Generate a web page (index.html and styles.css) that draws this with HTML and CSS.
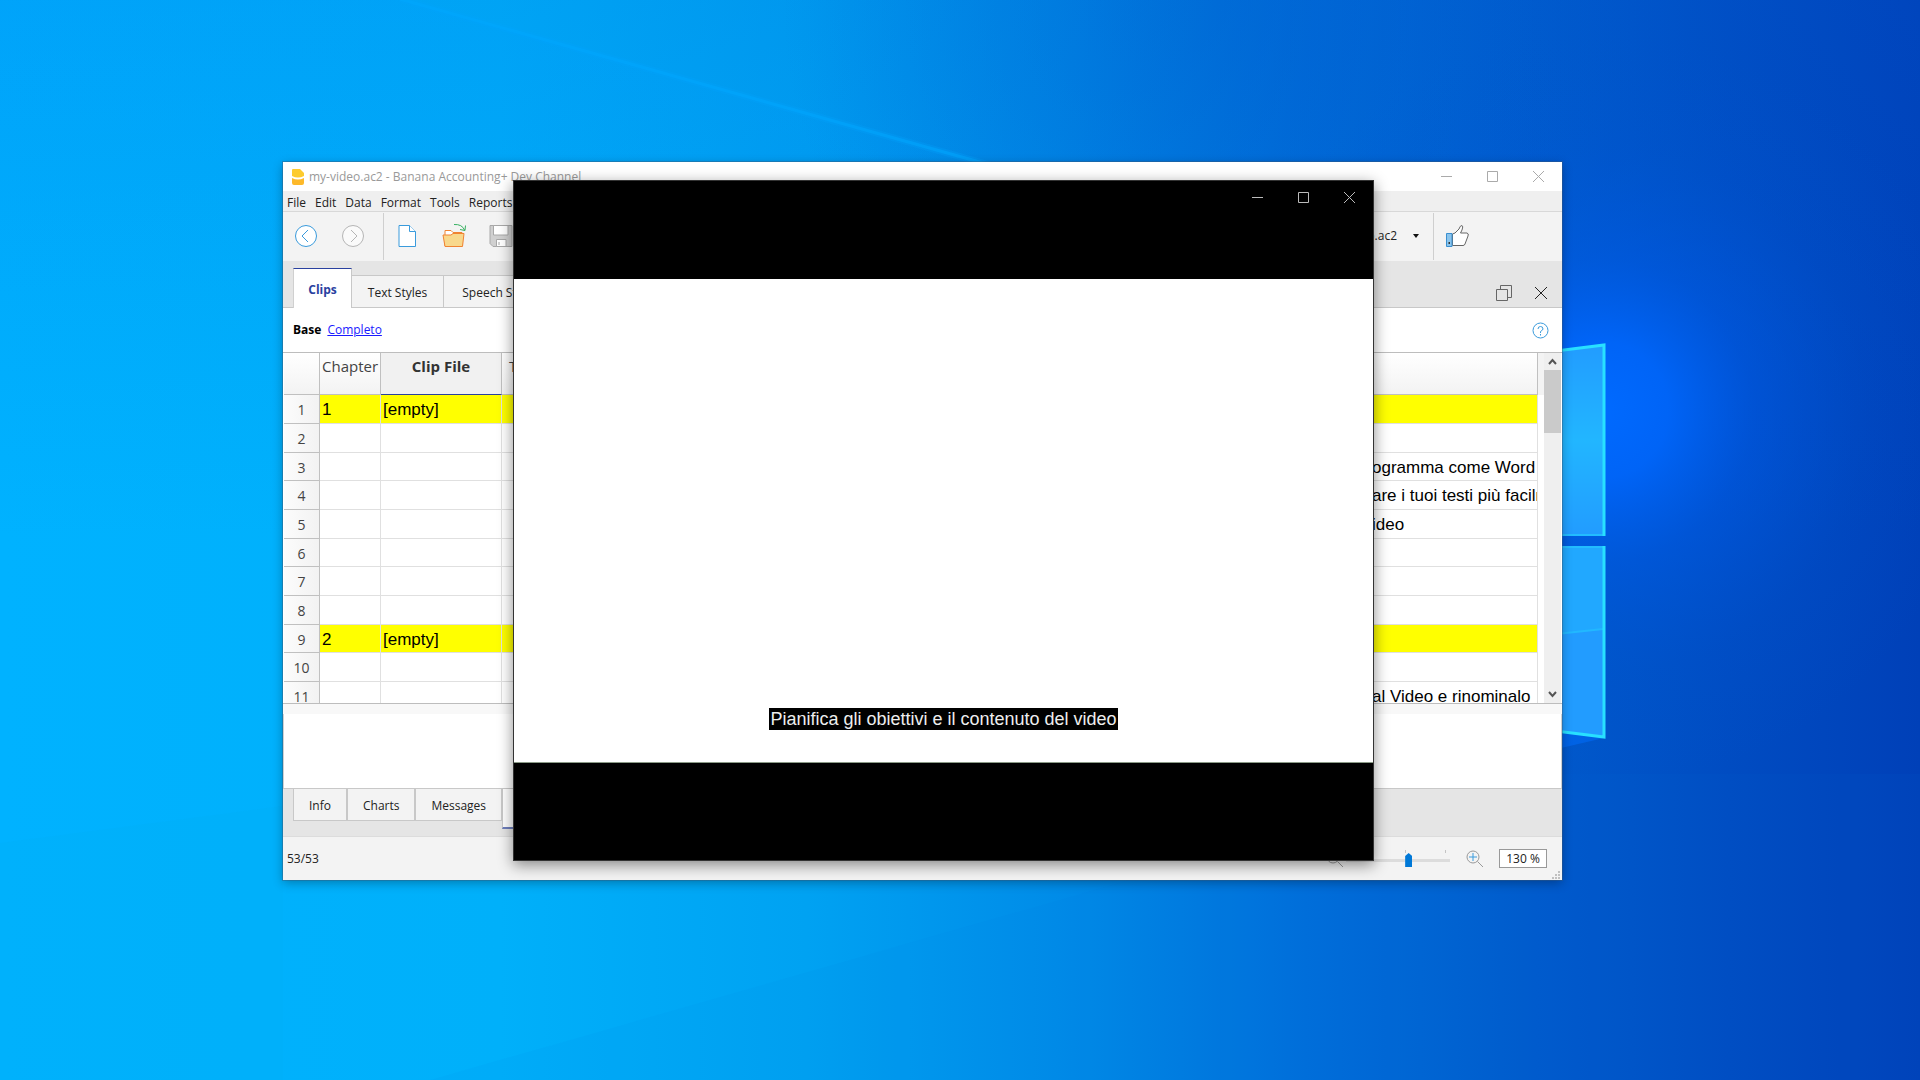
FILE: index.html
```html
<!DOCTYPE html>
<html lang="it">
<head>
<meta charset="utf-8">
<title>my-video.ac2 - Banana Accounting+ Dev Channel</title>
<link rel="stylesheet" href="styles.css">
</head>
<body>
<div class="desktop">
  <svg class="wallpaper" viewBox="0 0 1920 1080" preserveAspectRatio="xMidYMid slice" aria-hidden="true">
    <defs>
      <linearGradient id="sky" x1="0" y1="0" x2="1" y2="0">
        <stop offset="0" stop-color="#00b2ff"/>
        <stop offset=".26" stop-color="#00b0fa"/>
        <stop offset=".42" stop-color="#00a2f2"/>
        <stop offset=".55" stop-color="#008ce8"/>
        <stop offset=".68" stop-color="#006eda"/>
        <stop offset=".8" stop-color="#005acc"/>
        <stop offset=".9" stop-color="#004cc2"/>
        <stop offset="1" stop-color="#0040b8"/>
      </linearGradient>
      <linearGradient id="shade" x1="0" y1="0" x2="0" y2="1">
        <stop offset="0" stop-color="#0060d8" stop-opacity=".16"/>
        <stop offset=".5" stop-color="#0060d8" stop-opacity="0"/>
      </linearGradient>
      <radialGradient id="dusk" gradientUnits="userSpaceOnUse" cx="1220" cy="0" r="440">
        <stop offset="0" stop-color="#0058c8" stop-opacity=".32"/>
        <stop offset="1" stop-color="#0058c8" stop-opacity="0"/>
      </radialGradient>
      <radialGradient id="glow" gradientUnits="userSpaceOnUse" cx="1600" cy="410" r="380">
        <stop offset="0" stop-color="#006aff"/>
        <stop offset=".18" stop-color="#0066fc" stop-opacity=".9"/>
        <stop offset=".4" stop-color="#005cec" stop-opacity=".45"/>
        <stop offset=".7" stop-color="#0056d8" stop-opacity=".15"/>
        <stop offset="1" stop-color="#0054d0" stop-opacity="0"/>
      </radialGradient>
      <linearGradient id="beam" x1="0" y1="0" x2="0" y2="1">
        <stop offset="0" stop-color="#009dff" stop-opacity=".45"/>
        <stop offset="1" stop-color="#009dff" stop-opacity="0"/>
      </linearGradient>
      <linearGradient id="pane" x1="0" y1="0" x2="0" y2="1">
        <stop offset="0" stop-color="#229cff"/>
        <stop offset=".5" stop-color="#22b6ff"/>
        <stop offset="1" stop-color="#229cff"/>
      </linearGradient>
    </defs>
    <rect width="1920" height="1080" fill="url(#sky)"/>
    <rect width="1920" height="1080" fill="url(#shade)"/>
    <rect width="1920" height="1080" fill="url(#dusk)"/>
    <path d="M400 0 1000 166 1000 300 0 300 0 0Z" fill="url(#beam)" opacity=".4"/>
    <path d="M400-1 990 165" stroke="#00a4ff" stroke-width="7" opacity=".25"/>
    <path d="M400-1 990 165" stroke="#00a8ff" stroke-width="3" opacity=".5"/>
    <path d="M0 843 283 806V1080H0Z" fill="#00b0f4" opacity=".25"/>
    <path d="M1500 774 430 1080H1920V774Z" fill="#0078e0" opacity=".06"/>
    <rect width="1920" height="1080" fill="url(#glow)"/>
    <path d="M1561 732 1604 738 1561 748Z" fill="#0068f0" opacity=".7"/>
    <path d="M1500 358 1603 345V535H1500Z" fill="url(#pane)"/>
    <path d="M1500 547H1603V736L1500 724Z" fill="#229cff"/>
    <path d="M1500 547H1603V629L1500 640Z" fill="#22b0ff" opacity=".6"/>
    <path d="M1500 640 1603 629" stroke="#22b8ff" stroke-width="2"/>
    <path d="M1500 535H1603M1500 547H1603" stroke="#22bcff" stroke-width="2"/>
    <path d="M1500 358 1604 345V536M1604 546V737L1500 724" fill="none" stroke="#28e0ff" stroke-width="3"/>
  </svg>

  <main class="app">
    <header class="titlebar">
      <svg class="logo" viewBox="0 0 12 16" aria-hidden="true"><path d="M1 0H8L12 4V7Q6 10 0 7V1Q0 0 1 0Z" fill="#fdcb2e"/><path d="M0 9Q6 12 12 9V14Q12 16 10 16H2Q0 16 0 14Z" fill="#fdb92a"/></svg>
      <h1 class="caption">my-video.ac2 - Banana Accounting+ Dev Channel</h1>
      <div class="controls">
        <button type="button" aria-label="Minimize"><svg viewBox="0 0 11 11"><path d="M0 5.500H11"/></svg></button>
        <button type="button" aria-label="Maximize"><svg viewBox="0 0 11 11"><path d="M.5.500H10.500V10.500H.5Z"/></svg></button>
        <button type="button" aria-label="Close"><svg viewBox="0 0 11 11"><path d="M0 0 11 11M11 0 0 11"/></svg></button>
      </div>
    </header>
    <nav class="menubar">
      <button type="button">File</button><button type="button">Edit</button><button type="button">Data</button><button type="button">Format</button><button type="button">Tools</button><button type="button">Reports</button>
    </nav>
    <div class="toolbar">
      <button type="button" class="tool" aria-label="Back"><svg viewBox="0 0 24 24" fill="#fff" stroke="#3a9bdc"><circle cx="12" cy="12" r="10.500"/><path d="M14 6 8 12 14 18" fill="none"/></svg></button>
      <button type="button" class="tool" aria-label="Forward"><svg viewBox="0 0 24 24" fill="#fafafa" stroke="#b5b5b5"><circle cx="12" cy="12" r="10.500"/><path d="M10 6 16 12 10 18" fill="none"/></svg></button>
      <span class="divider"></span>
      <button type="button" class="tool" aria-label="New"><svg viewBox="0 0 24 24" fill="#fff" stroke="#3a9bdc"><path d="M4 1.500H14.500L20.500 7.500V22.500H4Z"/><path d="M14.500 1.500V7.500H20.500"/></svg></button>
      <button type="button" class="tool" aria-label="Open"><svg viewBox="0 0 24 24" stroke="#f08332"><path d="M3 22V6.500H9L11 8.500H20V22Z" fill="#fff"/><path d="M1 11H9L11 9.500H22L20.500 22.500H3Z" fill="#f8d88c"/><path d="M12 .5Q20 0 22.500 6M18 5.500 23 6.500 23.500 1.500" fill="none" stroke="#36b060"/></svg></button>
      <button type="button" class="tool" aria-label="Save"><svg viewBox="0 0 24 24" fill="#d0d0d0" stroke="#a8a8a8"><path d="M1 1.500H23V22.500H4L1 19.500Z"/><path d="M4.500 1.500H19V11H4.500Z" fill="#fff"/><path d="M7.500 22.500V15.500H17V22.500Z" fill="#fff"/><path d="M10 18V21"/></svg></button>
      <div class="toolbar-end">
        <button type="button" class="recent">o.ac2<svg viewBox="0 0 6 4" aria-hidden="true"><path d="M0 0H6L3 4Z"/></svg></button>
        <span class="divider"></span>
        <button type="button" class="tool thumb" aria-label="Like"><svg viewBox="0 0 24 24" fill="#fff" stroke="#666"><path d="M7.500 10 10 9 14 5Q15 1.500 17 1.500 18.500 2 17 6L15.500 9H22Q24 9.500 23 12L20 20Q19.500 21.500 18 21.500H7.500Z"/><path d="M1.500 9.500H7V22.500H1.500Z" fill="#8ac4ec" stroke="#3a8fd0"/><path d="M3.500 19H5" stroke="#333" stroke-width="2"/></svg></button>
      </div>
    </div>
    <div class="tabs">
      <button type="button" class="tab tab-on">Clips</button>
      <button type="button" class="tab tab-styles">Text Styles</button>
      <button type="button" class="tab tab-speech">Speech St</button>
      <div class="tab-tools">
        <button type="button" aria-label="Restore"><svg viewBox="0 0 16 16" fill="none" stroke="#666"><path d="M.5 4.500H11.500V15.500H.5ZM4.500 4.500V.5H15.500V12.500H11.500"/></svg></button>
        <button type="button" aria-label="Close tab"><svg viewBox="0 0 16 16" stroke="#222"><path d="M2 2 14 14M14 2 2 14"/></svg></button>
      </div>
    </div>
    <div class="views">
      <b>Base</b><a href="#completo">Completo</a>
      <button type="button" class="help" aria-label="Help"><svg viewBox="0 0 17 17" fill="none" stroke="#3a9bdc"><circle cx="8.500" cy="8.500" r="7.500"/><path d="M6 7Q6 4.500 8.500 4.500T11 7Q11 8 8.500 9.500V11M8.500 12V13.500"/></svg></button>
    </div>
    <section class="sheet">
      <div class="grid">
        <table>
          <colgroup><col class="c-num"><col class="c-chapter"><col class="c-file"><col><col class="c-text"></colgroup>
          <thead><tr><th></th><th>Chapter</th><th class="current">Clip File</th><th class="title">T</th><th></th></tr></thead>
          <tbody>
            <tr class="mark"><th>1</th><td>1</td><td>[empty]</td><td></td><td></td></tr>
            <tr><th>2</th><td></td><td></td><td></td><td></td></tr>
            <tr><th>3</th><td></td><td></td><td></td><td>ogramma come Word</td></tr>
            <tr><th>4</th><td></td><td></td><td></td><td>are i tuoi testi più facilmente</td></tr>
            <tr><th>5</th><td></td><td></td><td></td><td>ideo</td></tr>
            <tr><th>6</th><td></td><td></td><td></td><td></td></tr>
            <tr><th>7</th><td></td><td></td><td></td><td></td></tr>
            <tr><th>8</th><td></td><td></td><td></td><td></td></tr>
            <tr class="mark"><th>9</th><td>2</td><td>[empty]</td><td></td><td></td></tr>
            <tr><th>10</th><td></td><td></td><td></td><td></td></tr>
            <tr><th>11</th><td></td><td></td><td></td><td>al Video e rinominalo</td></tr>
          </tbody>
        </table>
      </div>
      <div class="gutter"></div>
      <div class="scroll">
        <button type="button" aria-label="Scroll up"><svg viewBox="0 0 9 7"><path d="M1 6 4.500 2 8 6"/></svg></button>
        <span class="scroll-thumb"></span>
        <button type="button" class="down" aria-label="Scroll down"><svg viewBox="0 0 9 7"><path d="M1 1 4.500 5 8 1"/></svg></button>
      </div>
    </section>
    <div class="splitter"></div>
    <div class="panel"></div>
    <div class="docks">
      <button type="button" class="dock">Info</button>
      <button type="button" class="dock">Charts</button>
      <button type="button" class="dock">Messages</button>
      <button type="button" class="dock dock-on" aria-label="Current panel"></button>
    </div>
    <footer class="status">
      <span>53/53</span>
      <div class="zoom">
        <button type="button" class="lens" aria-label="Zoom out"><svg viewBox="0 0 18 18" fill="none" stroke="#999"><circle cx="7" cy="7" r="6"/><path d="M11.500 11.500 17 17"/><path d="M3.500 7H10.500" stroke="#3a9bdc"/></svg></button>
        <div class="slider">
          <span class="ticks"><i></i><i></i></span>
          <input type="range" min="0" max="100" value="61" aria-label="Zoom">
        </div>
        <button type="button" class="lens" aria-label="Zoom in"><svg viewBox="0 0 18 18" fill="none" stroke="#999"><circle cx="7" cy="7" r="6"/><path d="M11.500 11.500 17 17"/><path d="M3 7H11M7 3V11" stroke="#3a9bdc"/></svg></button>
        <input type="text" class="percent" value="130 %" aria-label="Zoom level">
        <svg class="grip" viewBox="0 0 9 9" aria-hidden="true"><path d="M6 0H8V2H6ZM6 3H8V5H6ZM3 3H5V5H3ZM0 6H2V8H0ZM3 6H5V8H3ZM6 6H8V8H6Z"/></svg>
      </div>
    </footer>
  </main>

  <section class="player" aria-label="Video">
    <header class="player-bar">
      <div class="controls">
        <button type="button" aria-label="Minimize"><svg viewBox="0 0 11 11"><path d="M0 5.500H11"/></svg></button>
        <button type="button" aria-label="Maximize"><svg viewBox="0 0 11 11"><path d="M.5.500H10.500V10.500H.5Z"/></svg></button>
        <button type="button" aria-label="Close"><svg viewBox="0 0 11 11"><path d="M0 0 11 11M11 0 0 11"/></svg></button>
      </div>
    </header>
    <div class="frame"><p class="subtitle">Pianifica gli obiettivi e il contenuto del video</p></div>
    <div class="player-foot"></div>
  </section>
</div>
</body>
</html>
```
FILE: styles.css
```css
* { box-sizing: border-box; }

body {
  margin: 0;
  font: 12px/16px "Open Sans", "Noto Sans", sans-serif;
  color: #222;
}

button {
  margin: 0;
  padding: 0;
  border: 0;
  background: none;
  font: inherit;
  color: inherit;
}

svg { display: block; }

.desktop {
  position: relative;
  min-height: 100vh;
  overflow: hidden;
  background: #0078d7;
}

.wallpaper {
  position: absolute;
  inset: 0;
  width: 100%;
  height: 100%;
}

/* Main window */
.app {
  position: absolute;
  top: 162px;
  left: 283px;
  right: 358px;
  display: flex;
  flex-direction: column;
  background: #fff;
  box-shadow: 0 0 0 1px rgba(60, 90, 120, .4), 0 3px 10px rgba(0, 0, 0, .3);
}

.titlebar {
  display: flex;
  align-items: center;
  height: 29px;
  padding-left: 9px;
  gap: 5px;
  color: #999;
}

.logo { width: 12px; height: 16px; }

.caption {
  margin: 0;
  font-size: 12px;
  font-weight: 400;
  line-height: 16px;
}

.controls {
  display: flex;
  margin-left: auto;
  stroke: #aaa;
  fill: none;
}

.titlebar .controls { padding-right: 1px; }

.controls button {
  display: grid;
  place-items: center;
  width: 46px;
  height: 28px;
}

.controls svg { width: 11px; height: 11px; }

.menubar {
  display: flex;
  gap: 9px;
  height: 21px;
  padding: 3px 4px 0;
  background: #efefef;
  border-bottom: 1px solid #d8d8d8;
}

.toolbar {
  display: flex;
  align-items: center;
  height: 49px;
  padding: 0 0 1px 11px;
  background: #f3f3f3;
}

.tool { width: 24px; height: 24px; margin-right: 23px; }
.tool svg { width: 24px; height: 24px; }

.divider {
  width: 1px;
  height: 47px;
  margin: 0 11px 0 -5px;
  background: #cfcfcf;
}

.toolbar-end {
  display: flex;
  align-items: center;
  margin-left: auto;
}

.recent { display: flex; align-items: center; gap: 16px; margin-right: 19px; }
.recent svg { width: 6px; height: 4px; fill: #111; }
.thumb { margin-right: 93px; }

.tabs {
  display: flex;
  align-items: flex-end;
  height: 47px;
  padding-left: 10px;
  background: #e5e5e5;
  box-shadow: inset 0 -1px #c8c8c8;
}

.tab {
  height: 33px;
  padding-top: 2px;
  background: #f3f3f3;
  border: 1px solid #c8c8c8;
  border-left: 0;
}

.tab-on {
  width: 59px;
  height: 40px;
  padding-top: 3px;
  background: #fff;
  border-top: 1px solid #2a419f;
  border-left: 1px solid #d0d0d0;
  border-bottom: 0;
  font-weight: 700;
  color: #2a419f;
}

.tab-styles { width: 92px; }
.tab-speech { width: 92px; }

.tab-tools {
  display: flex;
  gap: 21px;
  margin: 0 13px 7px auto;
}

.tab-tools svg { width: 16px; height: 16px; }

.views {
  display: flex;
  align-items: center;
  gap: 6px;
  height: 44px;
  padding: 0 13px 0 10px;
}

.views b { color: #000; }
.views a { color: #1a1aff; }
.help { margin-left: auto; }
.help svg { width: 17px; height: 17px; }

/* Spreadsheet */
.sheet {
  display: flex;
  height: 352px;
  padding: 0 1px;
  border: 1px solid #bdbdbd;
  border-width: 1px 0;
  overflow: hidden;
}

.grid { flex: 1; min-width: 0; overflow: hidden; }

table {
  width: 100%;
  table-layout: fixed;
  border-collapse: separate;
  border-spacing: 0;
}

.c-num { width: 36px; }
.c-chapter { width: 61px; }
.c-file { width: 121px; }
.c-text { width: 168px; }

td, th {
  padding: 0 2px;
  border-right: 1px solid #e0e0e0;
  border-bottom: 1px solid #e0e0e0;
  overflow: hidden;
  white-space: nowrap;
}

thead th {
  height: 42px;
  padding-top: 3px;
  vertical-align: top;
  font-size: 15px;
  font-weight: 400;
  line-height: 20px;
  color: #444;
  background: linear-gradient(#fff, #f3f3f3);
  border-color: #c0c0c0;
}

thead th.current {
  font-weight: 700;
  color: #333;
  background: #f1f1f1;
  border-bottom-color: #2a419f;
}

thead th.title { padding-left: 7px; text-align: left; }

tbody tr { height: 29px; }
tbody tr:nth-child(3n) { height: 28px; }

tbody th {
  padding-top: 2px;
  font-size: 14px;
  font-weight: 400;
  line-height: 20px;
  color: #444;
  background: linear-gradient(90deg, #fcfcfc, #f2f2f2);
  border-color: #c0c0c0;
}

td {
  padding-top: 2px;
  font: 17px/20px "Liberation Sans", Arial, sans-serif;
  color: #000;
}

.mark td { background: #ff0; }

.gutter { width: 6px; }
.gutter::before { content: ""; display: block; height: 42px; background: #f3f3f3; }

.scroll {
  display: flex;
  flex-direction: column;
  width: 17px;
  background: #efefef;
}

.scroll button {
  display: grid;
  place-items: center;
  height: 17px;
}

.scroll .down { margin-top: auto; }
.scroll svg { width: 9px; height: 7px; fill: none; stroke: #555; stroke-width: 2; }
.scroll-thumb { height: 63px; background: #cacaca; }

.splitter { height: 10px; background: #f8f8f8; }

.panel { height: 74px; border: 1px solid #d0d0d0; border-width: 0 1px; }

.docks {
  display: flex;
  height: 48px;
  padding-left: 10px;
  background: #e5e5e5;
  border-top: 1px solid #c8c8c8;
}

.dock {
  height: 32px;
  padding: 2px 15px 0;
  background: #f3f3f3;
  border: 1px solid #c8c8c8;
  border-top-width: 0;
}

.dock-on {
  width: 92px;
  height: 40px;
  background: #fff;
  border-bottom: 2px solid #6e7ebc;
}

.status {
  display: flex;
  align-items: center;
  height: 44px;
  padding-left: 4px;
  background: #f3f3f3;
  border-top: 1px solid #dcdcdc;
}

.zoom {
  display: flex;
  align-items: center;
  align-self: stretch;
  margin-left: auto;
}

.lens svg { width: 18px; height: 18px; }

.slider { width: 104px; margin: 0 16px 0 2px; }

.ticks {
  display: flex;
  justify-content: flex-end;
  gap: 39px;
  height: 3px;
  padding-right: 4px;
}

.ticks i { width: 1px; background: #c4c4c4; }

.slider input {
  display: block;
  appearance: none;
  width: 100%;
  height: 14px;
  margin: 0;
  background: linear-gradient(#dcdcdc, #dcdcdc) center / 100% 3px no-repeat;
}

.slider input::-webkit-slider-thumb {
  appearance: none;
  width: 7px;
  height: 14px;
  background: #0078d7;
  clip-path: polygon(50% 0, 100% 3px, 100% 100%, 0 100%, 0 3px);
}

.percent {
  width: 48px;
  height: 19px;
  margin-left: 15px;
  padding: 0;
  border: 1px solid #999;
  background: #fff;
  font: inherit;
  color: inherit;
  text-align: center;
}

.grip {
  align-self: flex-end;
  width: 9px;
  height: 9px;
  margin: 0 1px 0 5px;
  fill: #c0c0c0;
}

/* Video window */
.player {
  position: absolute;
  top: 180px;
  left: 513px;
  right: 546px;
  display: flex;
  flex-direction: column;
  border: 1px solid #333;
  background: #000;
  box-shadow: 0 4px 14px rgba(0, 0, 0, .45);
}

.player-bar { display: flex; height: 98px; padding: 2px 1px 0 0; }
.player-bar .controls { stroke: #bbb; }

.frame {
  display: flex;
  flex-direction: column;
  align-items: center;
  justify-content: flex-end;
  height: 484px;
  padding-bottom: 32px;
  background: #fff;
  border-bottom: 1px solid #8a9a86;
}

.subtitle {
  margin: 0;
  padding: 0 1px;
  background: #000;
  color: #eee;
  font: 18px/22px "Liberation Sans", Arial, sans-serif;
}

.player-foot { height: 97px; }
```
